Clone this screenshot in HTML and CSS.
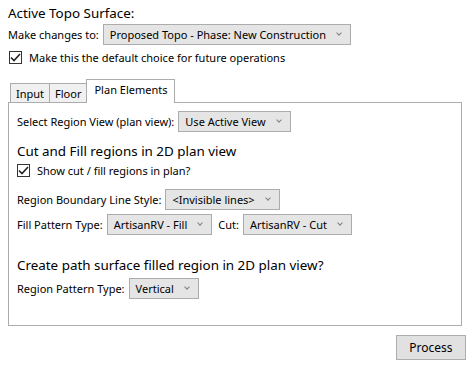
FILE: index.html
```html
<!DOCTYPE html>
<html lang="en">

<head>
    <meta charset="UTF-8">
    <title>Active Topo Surface</title>
    <link rel="stylesheet" href="styles.css">
</head>

<body>
    <div class="window">
        <div class="title">Active Topo Surface:</div>
        <div class="row first">
            <span class="label">Make changes to:</span>
            <div class="combo">Proposed Topo - Phase: New Construction<i class="arrow"></i></div>
        </div>
        <label class="check top-check">
            <span class="box"><svg width="11" height="9" viewBox="0 0 11 9"><path d="M1 4.5 L4 7.5 L10 1" fill="none" stroke="#222" stroke-width="1.6"/></svg></span>
            Make this the default choice for future operations
        </label>

        <div class="tab">
            <button class="tablinks">Input</button>
            <button class="tablinks">Floor</button>
            <button class="tablinks active">Plan Elements</button>
        </div>
        <div class="tabcontent">
            <div class="row r-view">
                <span class="label">Select Region View (plan view):</span>
                <div class="combo">Use Active View<i class="arrow"></i></div>
            </div>
            <div class="heading h-cut">Cut and Fill regions in 2D plan view</div>
            <label class="check">
                <span class="box"><svg width="11" height="9" viewBox="0 0 11 9"><path d="M1 4.5 L4 7.5 L10 1" fill="none" stroke="#222" stroke-width="1.6"/></svg></span>
                Show cut / fill regions in plan?
            </label>
            <div class="row r-line">
                <span class="label">Region Boundary Line Style:</span>
                <div class="combo">&lt;Invisible lines&gt;<i class="arrow"></i></div>
            </div>
            <div class="row r-fill">
                <span class="label">Fill Pattern Type:</span>
                <div class="combo">ArtisanRV - Fill<i class="arrow"></i></div>
                <span class="label cut-label">Cut:</span>
                <div class="combo">ArtisanRV - Cut<i class="arrow"></i></div>
            </div>
            <div class="heading h-path">Create path surface filled region in 2D plan view?</div>
            <div class="row r-pattern">
                <span class="label">Region Pattern Type:</span>
                <div class="combo">Vertical<i class="arrow"></i></div>
            </div>
        </div>
        <div class="footer">
            <button class="button">Process</button>
        </div>
    </div>
</body>

</html>
```

FILE: styles.css
```css
body {
    font-family: "Noto Sans", "Open Sans", sans-serif;
    font-size: 11px;
    color: #000;
    background: white;
    margin: 0;
    padding: 0;
}

.window {
    padding: 3px 14px 0 8px;
}

.title {
    font-size: 13.4px;
    line-height: 20px;
}

.row {
    display: flex;
    align-items: center;
    height: 21px;
}

.row.first {
    margin-top: 1px;
}

.label {
    margin-right: 4px;
    white-space: nowrap;
}

/* 下拉框 */
.combo {
    position: relative;
    height: 19px;
    line-height: 19px;
    padding: 0 24px 0 6px;
    background-color: #e5e5e5;
    border: 1px solid #acacac;
    white-space: nowrap;
    box-sizing: content-box;
}

.arrow {
    position: absolute;
    right: 9px;
    top: 6px;
    width: 3px;
    height: 3px;
    border-right: 1px solid #808080;
    border-bottom: 1px solid #808080;
    transform: rotate(45deg);
}

.check {
    display: flex;
    align-items: center;
    height: 18px;
}

.check .box {
    width: 11px;
    height: 11px;
    border: 1px solid #333;
    background: white;
    margin-right: 7px;
    display: flex;
    align-items: center;
    justify-content: center;
}

.top-check {
    margin-top: 3px;
    margin-left: 1px;
}

/* Tab按钮样式 */
.tab {
    display: flex;
    align-items: flex-end;
    margin-top: 13px;
    padding-left: 2px;
    height: 23px;
    position: relative;
    z-index: 1;
}

.tab button {
    font-family: inherit;
    font-size: 11px;
    background-color: #f0f0f0;
    border: 1px solid #acacac;
    border-bottom: none;
    margin: 0;
    margin-right: -1px;
    height: 19px;
    padding: 0 5px;
    color: #000;
}

.tab button.active {
    background-color: white;
    height: 24px;
    margin-bottom: -1px;
    padding: 0 7px 4px;
}

/* Tab页内容样式 */
.tabcontent {
    border: 1px solid #acacac;
    height: 222px;
    padding: 0 8px;
}

.r-view {
    margin-top: 8px;
}

.heading {
    font-size: 13.4px;
    line-height: 20px;
}

.h-cut {
    margin-top: 9px;
}

.r-line {
    margin-top: 10px;
}

.r-fill {
    margin-top: 4px;
}

.cut-label {
    margin-left: 6px;
}

.h-path {
    margin-top: 20px;
}

.r-pattern {
    margin-top: 3px;
}

.footer {
    display: flex;
    justify-content: flex-end;
    margin-top: 9px;
    margin-right: -4px;
}

.button {
    font-family: inherit;
    font-size: 12px;
    width: 70px;
    height: 25px;
    background-color: #e1e1e1;
    border: 1px solid #adadad;
    color: #000;
}
```
